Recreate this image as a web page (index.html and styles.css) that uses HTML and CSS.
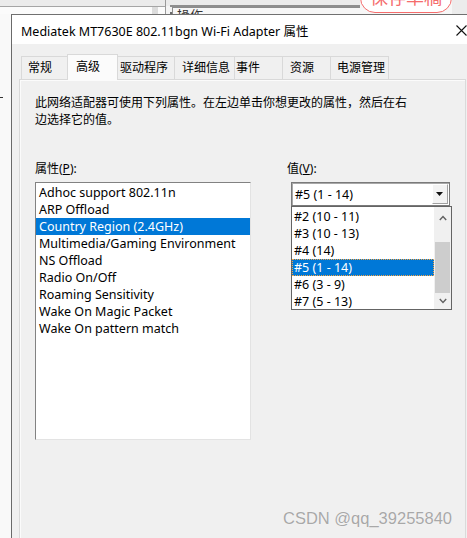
FILE: index.html
```html
<!DOCTYPE html>
<html lang="zh-CN">
<head>
<meta charset="utf-8">
<title>Mediatek MT7630E 802.11bgn Wi-Fi Adapter 属性</title>
<link rel="stylesheet" href="styles.css">
</head>
<body>
<div class="topbar">
  <div class="tb-left"><span class="tb-scroll"></span></div>
  <div class="tb-sep"></div>
  <div class="tb-mid"><div class="tb-box"><span class="tb-boxtext">操作</span></div></div>
  <div class="tb-btn"><span class="tb-btntext">保存草稿</span></div>
  <div class="tb-right"></div>
</div>
<div class="stage">
  <div class="gutter"><span class="dash"></span></div>
  <div class="dialog">
    <div class="titlebar">
      <span class="title">Mediatek MT7630E 802.11bgn Wi-Fi Adapter 属性</span>
      <svg class="close" width="11" height="11" viewBox="0 0 11 11"><path d="M0.5 0.5 L10.5 10.5 M10.5 0.5 L0.5 10.5" stroke="#111" stroke-width="1.1" fill="none"/></svg>
    </div>
    <div class="body">
      <div class="tabs">
        <div class="tab t1">常规</div>
        <div class="tab t2 active">高级</div>
        <div class="tab t3">驱动程序</div>
        <div class="tab t4">详细信息</div>
        <div class="tab t5">事件</div>
        <div class="tab t6">资源</div>
        <div class="tab t7">电源管理</div>
      </div>
      <div class="panel">
        <p class="desc">此网络适配器可使用下列属性。在左边单击你想更改的属性，然后在右边选择它的值。</p>
        <div class="cols">
          <div class="col-left">
            <div class="label">属性(<u>P</u>):</div>
            <div class="listbox">
              <div class="item">Adhoc support 802.11n</div>
              <div class="item">ARP Offload</div>
              <div class="item selected">Country Region (2.4GHz)</div>
              <div class="item">Multimedia/Gaming Environment</div>
              <div class="item">NS Offload</div>
              <div class="item">Radio On/Off</div>
              <div class="item">Roaming Sensitivity</div>
              <div class="item">Wake On Magic Packet</div>
              <div class="item">Wake On pattern match</div>
            </div>
          </div>
          <div class="col-right">
            <div class="label vlabel">值(<u>V</u>):</div>
            <div class="combo">
              <span class="combo-text">#5 (1 - 14)</span>
              <span class="combo-btn"><svg width="8" height="4" viewBox="0 0 8 4"><path d="M0 0 H7 L3.5 4 Z" fill="#111"/></svg></span>
            </div>
            <div class="droplist">
              <div class="options">
                <div class="opt">#2 (10 - 11)</div>
                <div class="opt">#3 (10 - 13)</div>
                <div class="opt">#4 (14)</div>
                <div class="opt focused">#5 (1 - 14)</div>
                <div class="opt">#6 (3 - 9)</div>
                <div class="opt">#7 (5 - 13)</div>
              </div>
              <div class="scrollbar">
                <svg class="sb-arrow" width="8" height="6" viewBox="0 0 8 6"><path d="M0.8 5 L4 1.5 L7.2 5" stroke="#606060" stroke-width="1.4" fill="none"/></svg>
                <div class="sb-track"><div class="sb-thumb"></div></div>
                <svg class="sb-arrow" width="8" height="6" viewBox="0 0 8 6"><path d="M0.8 1 L4 4.5 L7.2 1" stroke="#606060" stroke-width="1.4" fill="none"/></svg>
              </div>
            </div>
          </div>
        </div>
      </div>
    </div>
  </div>
</div>
<div class="watermark">CSDN @qq_39255840</div>
</body>
</html>
```

FILE: styles.css
```css
html, body {
  margin: 0;
  padding: 0;
}
body {
  width: 467px;
  height: 538px;
  overflow: hidden;
  position: relative;
  background: #f7f7f7;
  font-family: "Noto Sans", "Noto Sans CJK SC", sans-serif;
  font-size: 12px;
  color: #000;
}

/* ---- background window strip ---- */
.topbar {
  display: flex;
  height: 14px;
  overflow: hidden;
}
.tb-left {
  width: 165px;
  position: relative;
  background: linear-gradient(#ebebeb 0 6px, #a5a5a5 6px 7px, #fbfbfb 7px);
}
.tb-scroll {
  position: absolute;
  left: 152px;
  top: 7px;
  width: 6px;
  height: 7px;
  background: #dcdcdc;
}
.tb-sep {
  width: 5px;
  background: linear-gradient(#ebebeb 0 6px, #f4f4f4 6px);
  border-left: 1px solid #9a9a9a;
  box-sizing: border-box;
}
.tb-mid {
  width: 190px;
  background: linear-gradient(#ebebeb 0 5px, #8e8e8e 5px 7px, #f2f2f2 7px 12px, #6a6a6a 12px 14px);
  padding: 7px 0 0 2px;
  box-sizing: border-box;
}
.tb-box {
  height: 7px;
  border-top: 1px solid #8c8c8c;
  border-left: 1px solid #8c8c8c;
  background: #f6f6f6;
  overflow: hidden;
  padding-left: 4px;
}
.tb-boxtext {
  display: block;
  font-size: 13px;
  line-height: 13px;
  margin-top: 1px;
  color: #333;
}
.tb-btn {
  width: 92px;
  height: 30px;
  margin-top: -17px;
  box-sizing: border-box;
  border: 1px solid #f56c6c;
  border-radius: 16px;
  background: #fff;
  display: flex;
  justify-content: center;
  align-items: center;
  padding-bottom: 3px;
}
.tb-btntext {
  color: #f56c6c;
  font-size: 18px;
  line-height: 18px;
}
.tb-right {
  flex: 1;
  background: #ececec;
}

/* ---- stage ---- */
.stage {
  display: flex;
  height: 524px;
}
.gutter {
  width: 11px;
  background: #f9f9f9;
  padding-top: 83px;
  box-sizing: border-box;
}
.dash {
  display: block;
  width: 3px;
  height: 1px;
  background: #333;
}
.dialog {
  flex: 1;
  border-top: 1px solid #707070;
  border-left: 1px solid #6a6a6a;
  background: #f0f0f0;
  display: flex;
  flex-direction: column;
  overflow: hidden;
}
.titlebar {
  height: 29px;
  background: #fff;
  display: flex;
  align-items: center;
  justify-content: space-between;
  padding: 0 0 0 9px;
}
.title {
  font-size: 12.5px;
  color: #000;
  margin-top: 1px;
}
.close {
  margin-right: 0;
  margin-top: 1px;
}

/* ---- body ---- */
.body {
  flex: 1;
  padding: 10px 0 0 7px;
  display: flex;
  flex-direction: column;
}
.tabs {
  display: flex;
  align-items: flex-end;
  height: 25px;
  padding-left: 2px;
  position: relative;
  z-index: 1;
}
.tab {
  height: 23px;
  box-sizing: border-box;
  border: 1px solid #d9d9d9;
  border-bottom: none;
  border-right: none;
  background: #f0f0f0;
  line-height: 22px;
  padding-left: 6px;
  white-space: nowrap;
}
.tab.t7 {
  border-right: 1px solid #d9d9d9;
}
.tab.t1 { width: 48px; }
.tab.t2 { width: 51px; }
.tab.t3 { width: 58px; padding-left: 4px; }
.tab.t4 { width: 60px; padding-left: 7px; }
.tab.t5 { width: 48px; padding-left: 1px; }
.tab.t6 { width: 48px; padding-left: 7px; }
.tab.t7 { width: 59px; padding-left: 6px; }
.tab.active {
  height: 26px;
  margin: 0 -2px -1px -2px;
  border-right: 1px solid #d9d9d9;
  background: #fbfbfb;
  padding-left: 8px;
  line-height: 24px;
  position: relative;
}
.tab.active + .tab {
  border-left: none;
}

.panel {
  flex: 1;
  border: 1px solid #d9d9d9;
  border-bottom: none;
  border-right: 1px solid #dadada;
  margin-right: 1px;
  background: #f0f0f0;
  padding: 14px 0 0 15px;
  box-shadow: inset 1px 1px 0 #fbfbfb;
}
.desc {
  margin: 0;
  width: 380px;
  line-height: 17px;
}
.cols {
  display: flex;
  margin-top: 32px;
}
.label {
  line-height: 17px;
  height: 17px;
  margin-bottom: 5px;
}
.col-left {
  width: 216px;
}
.col-right {
  margin-left: 36px;
}
.listbox {
  height: 258px;
  box-sizing: border-box;
  background: #fff;
  border-top: 1px solid #828282;
  border-left: 1px solid #828282;
  border-right: 1px solid #e3e3e3;
  border-bottom: 1px solid #e3e3e3;
  padding: 1px 0 0 0;
}
.item {
  height: 17px;
  line-height: 17px;
  padding-left: 3px;
  font-size: 12.5px;
  white-space: nowrap;
}
.item.selected {
  background: #0078d7;
  color: #fff;
}

/* combobox */
.combo {
  margin-left: 4px;
  width: 159px;
  height: 24px;
  box-sizing: border-box;
  border: 1px solid #7a7a7a;
  box-shadow: inset 1px 1px 0 #a8a8a8;
  background: #fff;
  display: flex;
  align-items: center;
  justify-content: space-between;
  padding: 0 1px 0 3px;
}
.combo-text {
  line-height: 17px;
  font-size: 12.5px;
}
.combo-btn {
  width: 16px;
  height: 20px;
  box-sizing: border-box;
  background: #f3f3f3;
  border-right: 1px solid #a0a0a0;
  border-bottom: 1px solid #a0a0a0;
  border-top: 1px solid #fff;
  border-left: 1px solid #fff;
  display: flex;
  align-items: center;
  justify-content: center;
}
.droplist {
  margin-left: 4px;
  width: 161px;
  height: 104px;
  box-sizing: border-box;
  border: 1px solid #646464;
  background: #fff;
  display: flex;
}
.options {
  flex: 1;
  padding-top: 1px;
}
.opt {
  height: 17px;
  line-height: 17px;
  padding-left: 2px;
  box-sizing: border-box;
  font-size: 12.5px;
  white-space: nowrap;
}
.opt.focused {
  background: #0078d7;
  color: #fff;
  border: 1px dotted #f7a543;
  line-height: 15px;
  padding-left: 1px;
}
.scrollbar {
  width: 17px;
  background: #f0f0f0;
  display: flex;
  flex-direction: column;
  align-items: center;
}
.sb-arrow {
  flex: none;
  margin: 8px 0 0 0;
}
.sb-arrow:last-child {
  margin: 0 0 5px 0;
}
.sb-track {
  flex: 1;
  width: 100%;
  padding: 21px 1px 0 1px;
  box-sizing: border-box;
}
.sb-thumb {
  height: 51px;
  background: #cdcdcd;
}

.watermark {
  position: absolute;
  left: 283px;
  top: 509px;
  font-family: "Liberation Sans", Arial, sans-serif;
  font-size: 16.5px;
  color: #a8a8a8;
  text-shadow: 0 0 1px #fff;
  white-space: nowrap;
}
```
